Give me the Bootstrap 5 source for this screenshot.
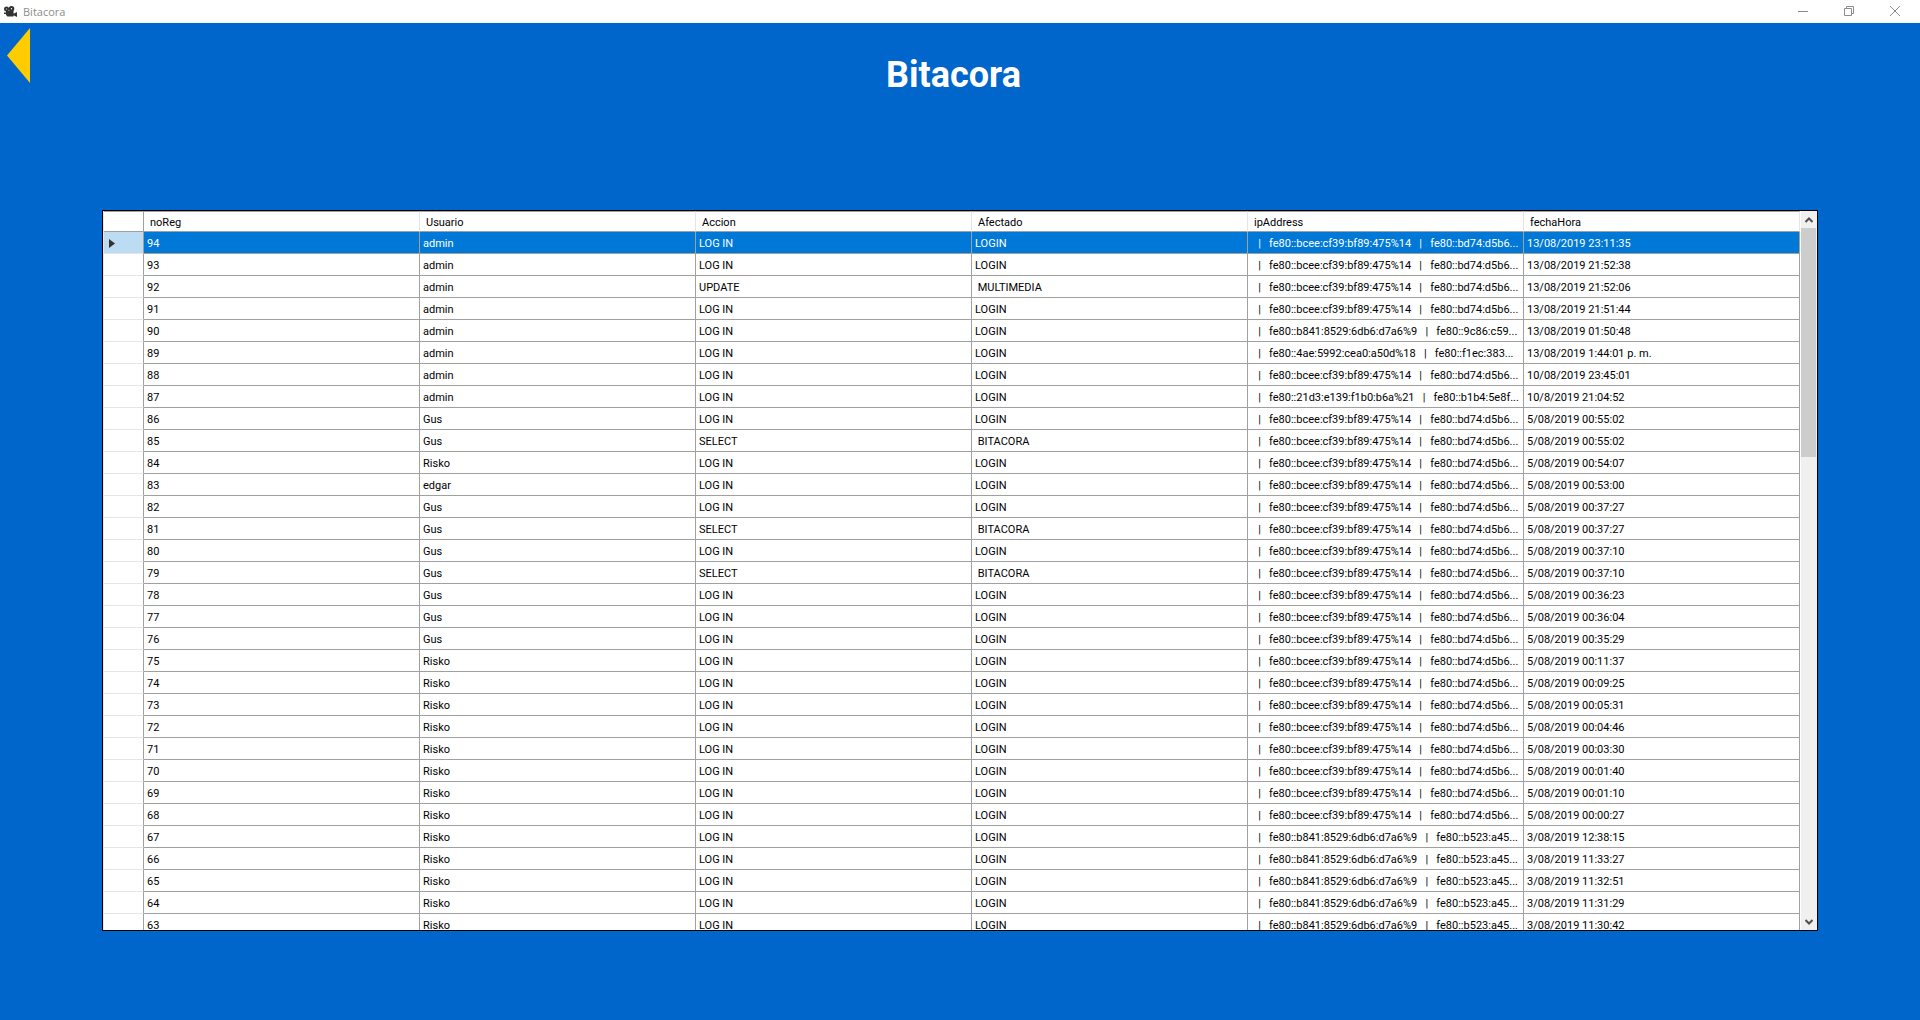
<!DOCTYPE html>
<html lang="es">
<head>
<meta charset="utf-8">
<meta name="viewport" content="width=device-width, initial-scale=1">
<title>Bitacora</title>
<link href="https://cdn.jsdelivr.net/npm/bootstrap@5.3.0/dist/css/bootstrap.min.css" rel="stylesheet">
<style>
  body { background: #0066cc; font-family: Roboto, "Liberation Sans", sans-serif; }
  .titlebar { height: 23px; padding: 0 2px 0 4px; color: #8c8c8c; font: 11px/24px "Open Sans", sans-serif; }
  .app-icon { margin-top: 6px; }
  .app-name { padding-left: 6px; }
  .win-btn { width: 46px; height: 22px; padding: 0; border: 0; background: none; color: #8c8c8c; line-height: 0; }
  .win-btn svg, .back-btn svg, .sb-btn svg { display: block; margin: auto; }
  .page-body { min-height: 0; }
  .page-head { height: 187px; padding: 5px 7px; }
  .back-btn { width: 23px; padding: 0; border: 0; background: none; }
  .page-title { margin: 22px 36px 0 0; color: #fff; font: bold 36px/50px Roboto, "Liberation Sans", sans-serif; text-align: center; }
  .grid-box { margin: 0 102px 89px; border: 1px solid #000; background: #fff; min-height: 0; }
  .grid-view { overflow: hidden; margin-right: 1px; }
  .log-grid { width: 100%; table-layout: fixed; border-collapse: separate; border-spacing: 0; font-size: 11px; line-height: 15px; color: #000; border-left: 1px solid #e5e5e5; }
  .log-grid th, .log-grid td { padding: 4px 3px 2px; height: 22px; font-weight: 400; white-space: pre; overflow: hidden; border-right: 1px solid #a0a0a0; border-bottom: 1px solid #a0a0a0; }
  .log-grid thead th { height: 21px; padding: 3px 6px 1px; border-top: 1px solid #a0a0a0; border-right-color: #e5e5e5; }
  .log-grid thead th:first-child { border-right-color: #a0a0a0; }
  .log-grid tbody th { border-bottom-color: #e5e5e5; padding-left: 5px; }
  .log-grid .ip-cell { padding-left: 2px; }
  .log-grid .current td { background: #0078d7; color: #fff; }
  .log-grid .current th { background: #bcdcf4; }
  .col-head { width: 40px; }
  .scroll-track { width: 16px; background: #f0f0f0; }
  .sb-btn { height: 17px; padding: 0; border: 0; background: none; }
  .sb-thumb { width: 15px; height: 229px; background: #cdcdcd; }
</style>
</head>
<body class="vh-100 overflow-hidden d-flex flex-column">
<header class="titlebar bg-white d-flex align-items-start flex-shrink-0">
  <svg width="13" height="11" viewBox="0 0 13 11" class="app-icon flex-shrink-0" aria-hidden="true">
    <g fill="#333"><circle cx="2.5" cy="3" r="2.5"/><circle cx="7.500" cy="2.800" r="2.800"/><path d="M2 5h7.500v5.500H3.500L2 9zM9 8l4-2v5l-4-2zM0 6.500h2v1.500H0z"/></g>
    <g fill="#fff"><circle cx="2.500" cy="3" r=".6"/><circle cx="7.500" cy="2.800" r=".7"/></g>
  </svg>
  <span class="app-name flex-grow-1">Bitacora</span>
  <button class="win-btn" aria-label="Minimizar"><svg width="10" height="10" stroke="currentColor"><path d="M0 5.500h10"/></svg></button>
  <button class="win-btn" aria-label="Restaurar"><svg width="10" height="10" fill="none" stroke="currentColor"><path d="M.5 2.500h7v7h-7zM2.500 2.500v-2h7v7h-2"/></svg></button>
  <button class="win-btn" aria-label="Cerrar"><svg width="10" height="10" stroke="currentColor"><path d="M0 0l10 10M10 0L0 10"/></svg></button>
</header>
<main class="page-body flex-grow-1 d-flex flex-column">
  <div class="page-head d-flex align-items-start flex-shrink-0">
    <button class="back-btn" aria-label="Regresar"><svg width="23" height="55"><path d="M23 0v55L0 27.500z" fill="#ffcc00"/></svg></button>
    <h1 class="page-title flex-grow-1">Bitacora</h1>
  </div>
  <div class="grid-box flex-grow-1 d-flex">
    <div class="grid-view flex-grow-1">
      <table class="log-grid">
        <colgroup><col class="col-head"><col><col><col><col><col><col></colgroup>
        <thead><tr><th></th><th>noReg</th><th>Usuario</th><th>Accion</th><th>Afectado</th><th>ipAddress</th><th>fechaHora</th></tr></thead>
        <tbody id="log"></tbody>
      </table>
    </div>
    <div class="scroll-track d-flex flex-column flex-shrink-0">
      <button class="sb-btn" aria-label="Subir"><svg width="8" height="6" fill="none" stroke="#505050" stroke-width="2"><path d="M.5 5L4 1.500 7.500 5"/></svg></button>
      <div class="sb-thumb"></div>
      <button class="sb-btn mt-auto" aria-label="Bajar"><svg width="8" height="6" fill="none" stroke="#505050" stroke-width="2"><path d="M.5 1L4 4.500 7.500 1"/></svg></button>
    </div>
  </div>
</main>
<script src="https://cdn.jsdelivr.net/npm/bootstrap@5.3.0/dist/js/bootstrap.bundle.min.js"></script>
<script>
  const A = ['fe80::bcee:cf39:bf89:475%14', 'fe80::bd74:d5b6...'];
  const B = ['fe80::b841:8529:6db6:d7a6%9', 'fe80::b523:a45...'];
  const I = ['LOG IN', 'LOGIN'], S = ['SELECT', ' BITACORA'];
  const rows = [
    ['admin', I, A, '13/08/2019 23:11:35'],
    ['admin', I, A, '13/08/2019 21:52:38'],
    ['admin', ['UPDATE', ' MULTIMEDIA'], A, '13/08/2019 21:52:06'],
    ['admin', I, A, '13/08/2019 21:51:44'],
    ['admin', I, [B[0], 'fe80::9c86:c59...'], '13/08/2019 01:50:48'],
    ['admin', I, ['fe80::4ae:5992:cea0:a50d%18', 'fe80::f1ec:383...'], '13/08/2019 1:44:01 p. m.'],
    ['admin', I, A, '10/08/2019 23:45:01'],
    ['admin', I, ['fe80::21d3:e139:f1b0:b6a%21', 'fe80::b1b4:5e8f...'], '10/8/2019 21:04:52'],
    ['Gus', I, A, '5/08/2019 00:55:02'],
    ['Gus', S, A, '5/08/2019 00:55:02'],
    ['Risko', I, A, '5/08/2019 00:54:07'],
    ['edgar', I, A, '5/08/2019 00:53:00'],
    ['Gus', I, A, '5/08/2019 00:37:27'],
    ['Gus', S, A, '5/08/2019 00:37:27'],
    ['Gus', I, A, '5/08/2019 00:37:10'],
    ['Gus', S, A, '5/08/2019 00:37:10'],
    ['Gus', I, A, '5/08/2019 00:36:23'],
    ['Gus', I, A, '5/08/2019 00:36:04'],
    ['Gus', I, A, '5/08/2019 00:35:29'],
    ['Risko', I, A, '5/08/2019 00:11:37'],
    ['Risko', I, A, '5/08/2019 00:09:25'],
    ['Risko', I, A, '5/08/2019 00:05:31'],
    ['Risko', I, A, '5/08/2019 00:04:46'],
    ['Risko', I, A, '5/08/2019 00:03:30'],
    ['Risko', I, A, '5/08/2019 00:01:40'],
    ['Risko', I, A, '5/08/2019 00:01:10'],
    ['Risko', I, A, '5/08/2019 00:00:27'],
    ['Risko', I, B, '3/08/2019 12:38:15'],
    ['Risko', I, B, '3/08/2019 11:33:27'],
    ['Risko', I, B, '3/08/2019 11:32:51'],
    ['Risko', I, B, '3/08/2019 11:31:29'],
    ['Risko', I, B, '3/08/2019 11:30:42']
  ];
  const marker = '<svg width="6" height="9" class="d-block"><path d="M0 0l6 4.500L0 9z" fill="#333"/></svg>';
  document.getElementById('log').innerHTML = rows.map(([user, act, ip, date], i) =>
    `<tr${i ? '' : ' class="current"'}><th scope="row">${i ? '' : marker}</th><td>${94 - i}</td><td>${user}</td><td>${act[0]}</td><td>${act[1]}</td><td class="ip-cell">   |   ${ip[0]}   |   ${ip[1]}</td><td>${date}</td></tr>`).join('');
</script>
</body>
</html>
